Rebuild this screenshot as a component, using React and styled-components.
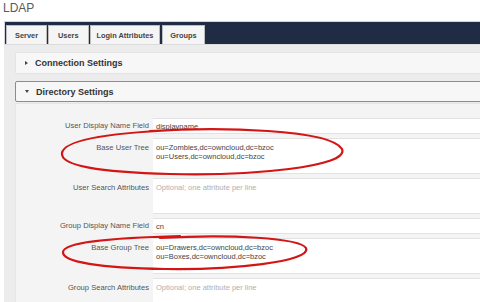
import styled, { createGlobalStyle } from "styled-components";

const GlobalStyle = createGlobalStyle`
  html, body {
    margin: 0;
    padding: 0;
    background: #ffffff;
    overflow: hidden;
  }
  body {
    font-family: "Liberation Sans", Arial, sans-serif;
  }
`;

const Page = styled.div`
  position: relative;
  width: 480px;
  height: 302px;
  overflow: hidden;
`;

const Title = styled.div`
  height: 21px;
  padding-left: 3px;
  font-size: 12px;
  line-height: 17px;
  color: #5a5a5a;
`;

const Tabs = styled.div`
  display: flex;
  margin-left: 4px;
  margin-right: -10px;
  height: 19px;
  padding: 3px 0 0 1px;
  background: #1f2c44;
  border: 1px solid #cfd5e2;
  border-bottom: none;
`;

const Tab = styled.div`
  display: flex;
  align-items: center;
  margin-right: ${(p) => p.gap || 1}px;
  padding: 0 ${(p) => p.pad || 7}px;
  background: #f5f5f5;
  border: 1px solid #bdbdbd;
  border-bottom: none;
  font-size: 7.4px;
  font-weight: bold;
  color: #444;
`;

const Content = styled.div`
  margin-left: 4px;
  margin-right: -10px;
  padding: 7px 0 0 11px;
  background: #ececec;
  border-top: 1px solid #dcdcdc;
  height: 300px;
`;

const Header = styled.div`
  display: flex;
  align-items: center;
  gap: 7px;
  height: ${(p) => (p.open ? 19 : 20)}px;
  margin-bottom: ${(p) => (p.open ? 1 : 7)}px;
  padding-left: 9px;
  background: #f7f7f7;
  border: 1px solid ${(p) => (p.open ? "#8c8c8c" : "#e4e4e4")};
  border-radius: 2px;
  font-size: 9px;
  font-weight: bold;
  color: #333;
`;

const Caret = styled.span`
  width: 0;
  height: 0;
  ${(p) =>
    p.open
      ? `border-left: 2.5px solid transparent;
         border-right: 2.5px solid transparent;
         border-top: 3px solid #444;`
      : `border-top: 2.5px solid transparent;
         border-bottom: 2.5px solid transparent;
         border-left: 3px solid #444;`}
`;

const Body = styled.div`
  padding: 14px 0 0 0;
  background: #f4f4f4;
  border: 1px solid #e6e6e6;
  height: 220px;
`;

const Row = styled.div`
  display: grid;
  grid-template-columns: 133px 1fr;
  column-gap: 4px;
  margin-bottom: 4px;
`;

const Label = styled.div`
  text-align: right;
  font-size: 7.6px;
  line-height: ${(p) => (p.multi ? 20 : 16)}px;
  color: #555;
`;

const Field = styled.div`
  height: ${(p) => (p.multi ? 36 : 16)}px;
  padding: ${(p) => (p.multi ? "4px" : "0")} 3px 0 3px;
  background: #ffffff;
  border-top: 1px solid #e2e2e2;
  border-bottom: 1px solid #e2e2e2;
  font-size: 7.5px;
  line-height: ${(p) => (p.multi ? "9px" : "16px")};
  color: ${(p) => (p.hint ? "#b0b0b0" : "#444")};
  box-sizing: border-box;
`;

const Overlay = styled.svg`
  position: absolute;
  left: 0;
  top: 0;
  pointer-events: none;
`;

export default function App() {
  return (
    <Page>
      <GlobalStyle />
      <Title>LDAP</Title>
      <Tabs>
        <Tab pad={8}>Server</Tab>
        <Tab pad={9}>Users</Tab>
        <Tab pad={6} gap={2}>Login Attributes</Tab>
        <Tab>Groups</Tab>
      </Tabs>
      <Content>
        <Header>
          <Caret />
          Connection Settings
        </Header>
        <Header open>
          <Caret open />
          Directory Settings
        </Header>
        <Body>
          <Row>
            <Label>User Display Name Field</Label>
            <Field>displayname</Field>
          </Row>
          <Row>
            <Label multi>Base User Tree</Label>
            <Field multi>
              ou=Zombies,dc=owncloud,dc=bzoc
              <br />
              ou=Users,dc=owncloud,dc=bzoc
            </Field>
          </Row>
          <Row>
            <Label multi>User Search Attributes</Label>
            <Field multi hint>
              Optional; one attribute per line
            </Field>
          </Row>
          <Row>
            <Label>Group Display Name Field</Label>
            <Field>cn</Field>
          </Row>
          <Row>
            <Label multi>Base Group Tree</Label>
            <Field multi>
              ou=Drawers,dc=owncloud,dc=bzoc
              <br />
              ou=Boxes,dc=owncloud,dc=bzoc
            </Field>
          </Row>
          <Row>
            <Label multi>Group Search Attributes</Label>
            <Field multi hint>
              Optional; one attribute per line
            </Field>
          </Row>
        </Body>
      </Content>
      <Overlay width="480" height="302" viewBox="0 0 480 302">
        <g fill="none" stroke="#d41515" strokeWidth="2.2" strokeLinecap="round">
          <path d="M150 131 C 220 127, 330 129, 342 149 C 350 167, 250 176, 170 174 C 100 172, 60 166, 62 153 C 64 140, 110 133, 175 130" />
          <path d="M160 238 C 230 234, 300 238, 306 248 C 312 262, 230 270, 165 269 C 100 268, 62 262, 63 252 C 64 242, 110 238, 180 236" />
        </g>
      </Overlay>
    </Page>
  );
}
